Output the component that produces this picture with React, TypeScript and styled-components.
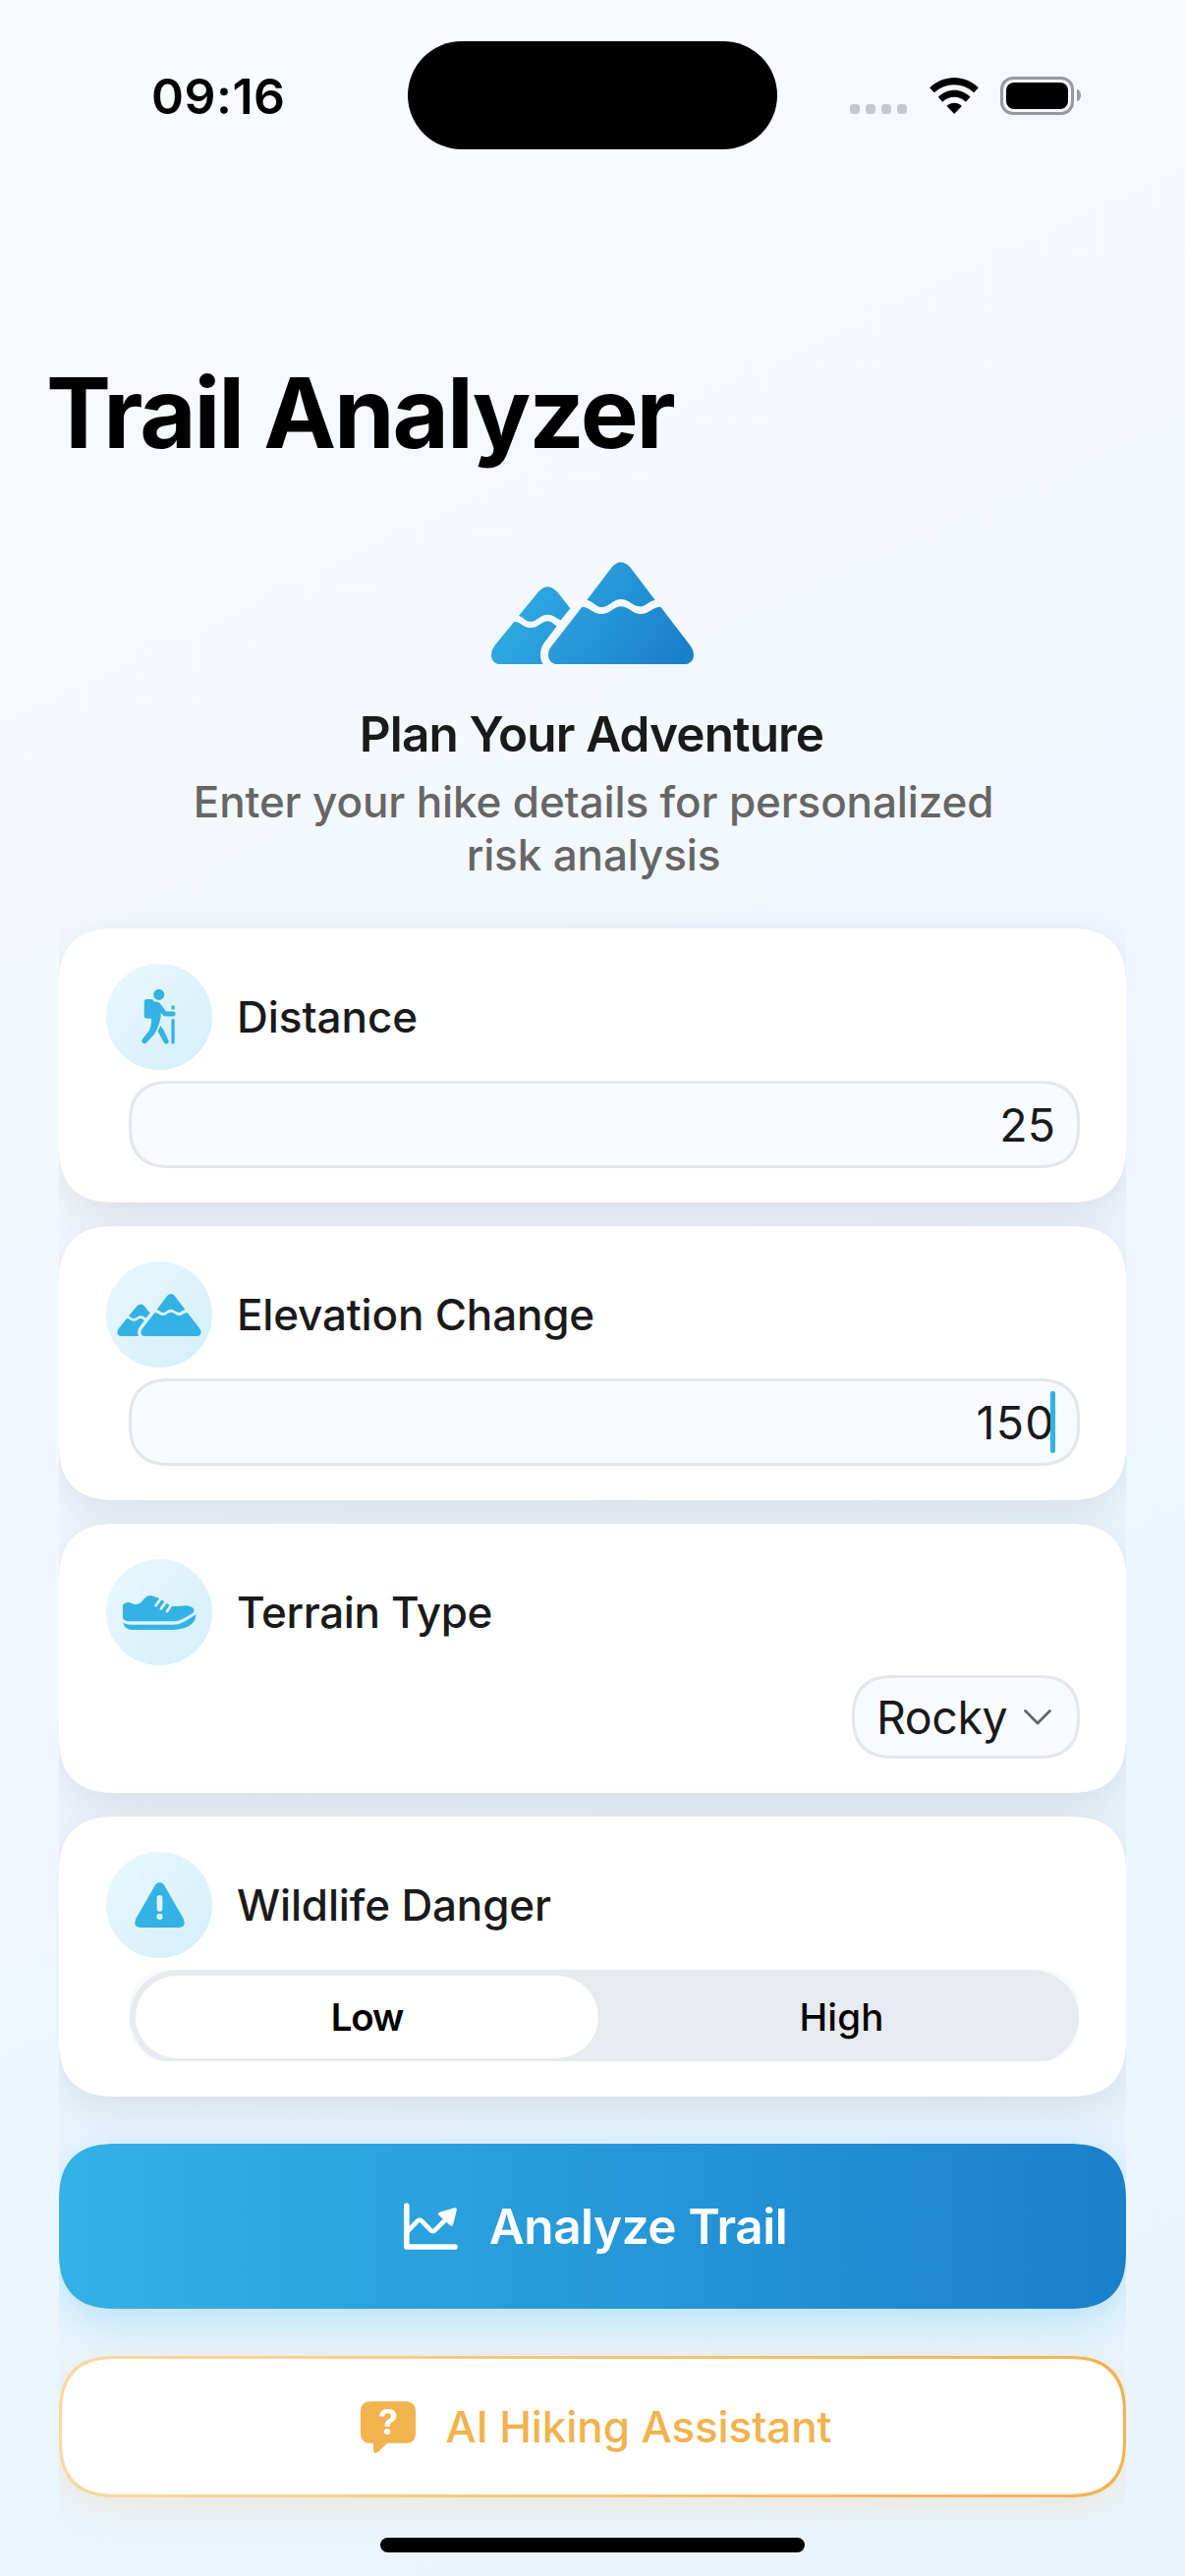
import React from "react";
import styled, { createGlobalStyle, css } from "styled-components";

const BLUE = "#33b2e6";
const DEEP_BLUE = "#1a80cc";
const AMBER = "#f2b24d";
const INK = "#1a1a1a";
const MUTED = "#666666";

const GlobalStyle = createGlobalStyle`
  *, *::before, *::after { box-sizing: border-box; }
  body {
    margin: 0;
    font-family: Inter, "Liberation Sans", sans-serif;
    -webkit-font-smoothing: antialiased;
  }
  svg { display: block; flex: none; }
`;

const continuousCorner = css`
  border-radius: 60px;
  corner-shape: superellipse(1.38);
`;

const Screen = styled.main`
  width: 1206px;
  height: 2622px;
  overflow: hidden;
  display: flex;
  flex-direction: column;
  align-items: stretch;
  background: linear-gradient(155deg, #fafcff 0%, #f5f9fe 20%, #f1f6ff 50%, #ebf5fe 75%, #e9f4fd 100%);
`;

const StatusBar = styled.header`
  display: grid;
  grid-template-columns: 415px 376px 415px;
  align-items: center;
  height: 110px;
  margin-top: 42px;
  flex: none;
`;

const Time = styled.div`
  padding-left: 154px;
  padding-top: 2px;
  font-size: 50px;
  line-height: 60px;
  font-weight: 600;
  letter-spacing: 0.49px;
  color: #000;
`;

const Island = styled.div`
  height: 110px;
  border-radius: 55px;
  background: #000;
`;

const StatusIcons = styled.div`
  display: flex;
  align-items: center;
  padding-left: 74px;
  gap: 22.5px;
`;

const SignalDots = styled.div`
  display: flex;
  gap: 6px;
  margin-top: 28px;
`;

const SignalDot = styled.span`
  width: 10px;
  height: 10px;
  border-radius: 3.5px;
  background: #c5c8cc;
`;

const Battery = styled.div`
  display: flex;
  align-items: center;
  gap: 3px;
`;

const BatteryShell = styled.div`
  width: 75px;
  height: 39px;
  padding: 3px;
  border: 3px solid #97999c;
  border-radius: 13px;
`;

const BatteryLevel = styled.div`
  height: 100%;
  border-radius: 8px;
  background: #000;
`;

const BatteryNub = styled.div`
  width: 4px;
  height: 12px;
  border-radius: 0 4px 4px 0 / 0 6px 6px 0;
  background: #97999c;
`;

const Title = styled.h1`
  margin: 208px 0 0 47px;
  font-size: 99px;
  line-height: 120px;
  font-weight: 700;
  letter-spacing: -2.12px;
  color: #000;
`;

const Hero = styled.section`
  display: flex;
  flex-direction: column;
  align-items: center;
  margin-top: 92px;
`;

const HeroHeading = styled.h2`
  margin: 41px 2px 0 0;
  font-size: 49.5px;
  line-height: 60px;
  font-weight: 600;
  letter-spacing: -0.87px;
  color: ${INK};
`;

const HeroText = styled.p`
  width: 900px;
  margin: 12px 0 0 2px;
  font-size: 44px;
  line-height: 54px;
  font-weight: 500;
  letter-spacing: -0.13px;
  text-align: center;
  color: ${MUTED};
`;

const Form = styled.form`
  display: flex;
  flex-direction: column;
  margin: 48px 60px 0;
  overflow-x: clip;
  overflow-y: visible;
`;

const Card = styled.section<{ $bottom?: number }>`
  display: flex;
  flex-direction: column;
  padding: 36px 48px ${(p) => p.$bottom ?? 35}px;
  background: #fff;
  box-shadow: 0 12px 48px rgba(0, 0, 0, 0.1);
  ${continuousCorner}

  & + & {
    margin-top: 24px;
  }
`;

const CardHead = styled.div`
  display: flex;
  align-items: center;
  gap: 25px;
`;

const IconDisc = styled.div`
  display: flex;
  align-items: center;
  justify-content: center;
  width: 108px;
  height: 108px;
  border-radius: 50%;
  background: linear-gradient(135deg, #e9f7fe 5%, #d4eff8 95%);
`;

const Label = styled.label<{ $spacing: number }>`
  font-size: 44px;
  line-height: 54px;
  font-weight: 500;
  letter-spacing: ${(p) => p.$spacing}px;
  color: ${INK};
`;

const fieldLook = css`
  border: 3px solid #e5e6ea;
  background: #f7faff;
  font-size: 46.5px;
  color: ${INK};
  border-radius: 42px;
  corner-shape: superellipse(1.3);
`;

const Field = styled.div<{ $spacing?: number }>`
  display: flex;
  align-items: center;
  justify-content: flex-end;
  height: 89px;
  margin: 11px -1px 0 23px;
  padding-right: 22px;
  letter-spacing: ${(p) => p.$spacing ?? 0}px;
  ${fieldLook}
`;

const Caret = styled.span`
  width: 5px;
  height: 63px;
  margin-left: -5px;
  border-radius: 2px;
  background: ${BLUE};
`;

const Picker = styled.button`
  display: flex;
  align-items: center;
  justify-content: space-between;
  align-self: flex-end;
  width: 232px;
  height: 85px;
  margin: 10px -1px 0 0;
  padding: 0 26px 0 22px;
  font-family: inherit;
  letter-spacing: -0.4px;
  ${fieldLook}
`;

const SegmentWell = styled.div`
  height: 93px;
  margin: 12px 0 0 24px;
  overflow: hidden;
  border-radius: 36px;
  background: #f7faff;
`;

const Segments = styled.div`
  display: grid;
  grid-template-columns: 1fr 1fr;
  gap: 12px;
  height: 96px;
  padding: 6px;
  border-radius: 48px;
  background: #e7eaee;
`;

const Segment = styled.div<{ $active?: boolean }>`
  display: flex;
  align-items: center;
  justify-content: center;
  border-radius: 42px;
  font-size: 38.5px;
  color: #000;
  background: ${(p) => (p.$active ? "#fff" : "transparent")};
  font-weight: ${(p) => (p.$active ? 600 : 500)};
  letter-spacing: ${(p) => (p.$active ? -1.1 : 0.2)}px;
`;

const actionLook = css`
  display: flex;
  align-items: center;
  justify-content: center;
  margin-top: 48px;
  font-family: inherit;
  ${continuousCorner}
`;

const PrimaryAction = styled.button`
  ${actionLook}
  height: 168px;
  gap: 32px;
  padding: 0 0 0 6px;
  border: 0;
  color: #fff;
  font-size: 49.5px;
  font-weight: 600;
  letter-spacing: -0.46px;
  background: linear-gradient(90deg, ${BLUE}, ${DEEP_BLUE});
  box-shadow: 0 12px 48px rgba(51, 178, 230, 0.3);
`;

const SecondaryAction = styled.button`
  ${actionLook}
  height: 144px;
  gap: 31px;
  padding: 0 0 0 7px;
  border: 3px solid transparent;
  color: ${AMBER};
  font-size: 44px;
  font-weight: 500;
  letter-spacing: -0.1px;
  background:
    linear-gradient(#fff, #fff) padding-box,
    linear-gradient(90deg, #fad8a2, ${AMBER}) border-box;
  box-shadow: 0 9px 36px rgba(242, 178, 77, 0.2);
`;

const HomeIndicator = styled.div`
  flex: none;
  align-self: center;
  width: 432px;
  height: 15px;
  margin-top: 41px;
  border-radius: 8px;
  background: #000;
`;

function WifiIcon() {
  return (
    <svg width="50" height="37" viewBox="272 57 149 111" fill="#000">
      <path d="M272 88C316 47 378 47 421 88L407 103C373 71 321 71 286 103Z" />
      <path d="M298 116C326 88 368 88 396 116L382 131C362 111 332 111 311 131Z" />
      <path d="M324 144C337 131 357 131 370 144L347 168Z" />
    </svg>
  );
}

function MountainsIcon({ width, height, fill }: { width: number; height: number; fill: string }) {
  return (
    <svg width={width} height={height} viewBox="60 66 618 312" fill={fill}>
      <defs>
        <linearGradient id="slope" gradientUnits="userSpaceOnUse" x1="100" y1="60" x2="600" y2="400">
          <stop offset="0" stopColor={BLUE} />
          <stop offset="1" stopColor={DEEP_BLUE} />
        </linearGradient>
      </defs>
      <path d="M352 182L427 83Q455 50 485 83L560 182C540 186 530 202 515 202C491 202 482 180 456 180C430 180 420 204 397 204C380 204 372 186 352 182Z" />
      <path d="M337 203C360 203 370 225 397 225C425 225 432 202 456 202C480 202 490 225 515 225C542 225 552 203 577 203L668 322Q678 335 678 350C678 366 666 378 650 378H262C246 378 234 366 234 350Q234 335 244 323Z" />
      <path d="M144 230L204 157Q232 126 261 157L301 208L272 244C258 238 250 227 232 227C208 227 200 248 180 248C164 248 158 234 144 230Z" />
      <path d="M130 248C150 248 156 267 180 267C206 267 214 247 232 247C244 247 250 256 260 262L222 312Q210 328 210 348C210 360 212 370 218 378H88C72 378 60 366 60 350Q60 335 70 322Z" />
    </svg>
  );
}

function HikerIcon() {
  return (
    <svg width="36" height="56" viewBox="0 0 36 56" fill={BLUE} stroke="none">
      <circle cx="17.7" cy="5.4" r="5.5" />
      <path d="M5.7 10H9.8Q12 10 12.7 12.4L15.5 12.7Q18.2 13 19.8 15.4L25 22.6H32.2Q34.7 22.8 34.7 25.1Q34.7 27.5 32.2 27.6H25.2Q23.2 27.6 22 26.4L19.8 24Q20 30 17.8 35.5Q15.5 42 13.2 45.4L5.2 54.3Q3.2 56.3 1.2 54.6Q-0.6 52.8 0.9 50.7L8.2 41.6Q10.4 36 10 29.8H5.7Q2.7 29.8 2.7 26.8V13Q2.7 10 5.7 10Z" />
      <path d="M19.2 37L22.6 41.4L27.4 51.9Q28.3 54.4 26.3 55.3Q24.2 56.2 22.8 54L16.6 42.8Z" />
      <rect x="30.4" y="30" width="3.3" height="25.6" rx="1.6" />
      <path d="M30.4 18Q30.4 16.3 32 16.3Q33.7 16.3 33.7 18V20.6H30.4Z" />
    </svg>
  );
}

function ShoeIcon() {
  return (
    <svg width="75" height="35" viewBox="0 0 75 35" fill={BLUE}>
      <path d="M0 9.6Q2.6 6.6 6.2 7.1Q9 7.6 11 8.7Q15.5 9.6 18.4 7Q20.4 4.9 22.6 2.5Q26.4 -1.3 31.6 0.9L37 2.8L49.4 11Q57.5 11.1 64.5 10.3Q71 10.7 72.4 14.6Q72.8 16.8 70.8 18.2L60.6 24Q56.6 26.3 51.5 26.3H7Q0.4 26.3 0 22Z" />
      <path d="M0.3 27.8Q3.4 29.8 7.4 29.8H50.8Q57 29.8 61.4 27.3L72.6 20.5Q73.7 19.8 74.2 18.8Q75 24 70.6 28.6Q64.6 34.2 54 34.7Q48 35 9.6 35Q2 35 0.3 27.8Z" />
      <g stroke="#e1f3fb" strokeWidth="2.7" strokeLinecap="round">
        <path d="M39.2 2.4L33.6 10.2" />
        <path d="M44.2 6.3L38.9 13.4" />
        <path d="M49.4 9.2L45 16.2" />
      </g>
    </svg>
  );
}

function WarningIcon() {
  return (
    <svg width="51" height="46" viewBox="0 0 50.5 45.5" fill={BLUE}>
      <path d="M20.9 2.5Q25.25 -2.4 29.6 2.5L49 36Q52.8 45.2 44.3 45.5H6.2Q-2.3 45.2 1.5 36Z" />
      <rect x="22.4" y="12.8" width="5.7" height="16.6" rx="2.85" fill="#e1f3fb" />
      <circle cx="25.25" cy="34.4" r="3.1" fill="#e1f3fb" />
    </svg>
  );
}

function ChevronIcon() {
  return (
    <svg width="28" height="16" viewBox="0 0 28 16" fill="none" stroke={MUTED} strokeWidth="2.8" strokeLinecap="round" strokeLinejoin="round">
      <path d="M1.6 1.6L14 14L26.4 1.6" />
    </svg>
  );
}

function ChartIcon() {
  return (
    <svg width="55" height="48" viewBox="168 36 166 144" fill="none" stroke="#fff" strokeWidth="17" strokeLinecap="round" strokeLinejoin="round">
      <path d="M176.5 45V171.5H325" />
      <path d="M181 122L210 92Q216.500 85 223 92L250 120Q257 127 264 120L296 88" strokeWidth="14" />
      <path d="M279 70L325 57L314 102Z" fill="#fff" strokeWidth="11" />
    </svg>
  );
}

const BubbleMark = styled.text`
  font-family: Inter, sans-serif;
  font-size: 108px;
  font-weight: 700;
  text-anchor: middle;
  fill: #fff;
`;

function QuestionBubbleIcon() {
  return (
    <svg width="56" height="53" viewBox="33 640 168 158" fill={AMBER}>
      <path d="M65 640H169Q201 640 201 672V736Q201 768 169 768H115L86 795Q72 804 72 788V768H65Q33 768 33 736V672Q33 640 65 640Z" />
      <BubbleMark x="117" y="743">?</BubbleMark>
    </svg>
  );
}

export default function App() {
  return (
    <>
      <GlobalStyle />
      <Screen>
        <StatusBar>
          <Time>09:16</Time>
          <Island />
          <StatusIcons>
            <SignalDots>
              <SignalDot />
              <SignalDot />
              <SignalDot />
              <SignalDot />
            </SignalDots>
            <WifiIcon />
            <Battery>
              <BatteryShell>
                <BatteryLevel />
              </BatteryShell>
              <BatteryNub />
            </Battery>
          </StatusIcons>
        </StatusBar>

        <Title>Trail Analyzer</Title>

        <Hero>
          <MountainsIcon width={206} height={104} fill="url(#slope)" />
          <HeroHeading>Plan Your Adventure</HeroHeading>
          <HeroText>
            Enter your hike details for personalized
            <br />
            risk analysis
          </HeroText>
        </Hero>

        <Form onSubmit={(e) => e.preventDefault()}>
          <Card>
            <CardHead>
              <IconDisc>
                <HikerIcon />
              </IconDisc>
              <Label $spacing={-0.03}>Distance</Label>
            </CardHead>
            <Field>25</Field>
          </Card>

          <Card>
            <CardHead>
              <IconDisc>
                <MountainsIcon width={86} height={43} fill={BLUE} />
              </IconDisc>
              <Label $spacing={-0.17}>Elevation Change</Label>
            </CardHead>
            <Field $spacing={1.3}>
              150
              <Caret />
            </Field>
          </Card>

          <Card>
            <CardHead>
              <IconDisc>
                <ShoeIcon />
              </IconDisc>
              <Label $spacing={-0.34}>Terrain Type</Label>
            </CardHead>
            <Picker type="button">
              Rocky
              <ChevronIcon />
            </Picker>
          </Card>

          <Card $bottom={36}>
            <CardHead>
              <IconDisc>
                <WarningIcon />
              </IconDisc>
              <Label $spacing={-0.15}>Wildlife Danger</Label>
            </CardHead>
            <SegmentWell>
              <Segments>
                <Segment $active>Low</Segment>
                <Segment>High</Segment>
              </Segments>
            </SegmentWell>
          </Card>

          <PrimaryAction type="submit">
            <ChartIcon />
            Analyze Trail
          </PrimaryAction>
          <SecondaryAction type="button">
            <QuestionBubbleIcon />
            AI Hiking Assistant
          </SecondaryAction>
        </Form>

        <HomeIndicator />
      </Screen>
    </>
  );
}
